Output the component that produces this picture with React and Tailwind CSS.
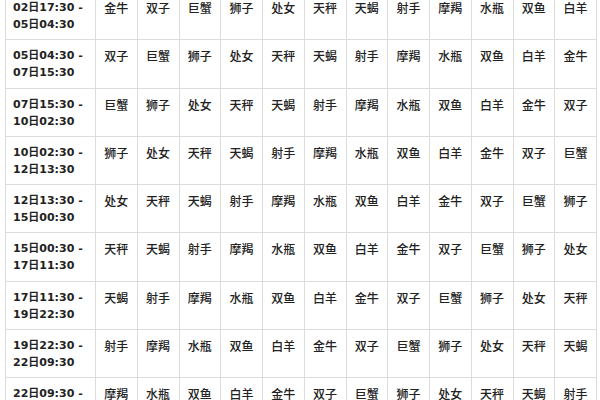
import React from "react";

const Z = ["白羊", "金牛", "双子", "巨蟹", "狮子", "处女", "天秤", "天蝎", "射手", "摩羯", "水瓶", "双鱼"];

const rows = [
  ["02日17:30 -", "05日04:30"],
  ["05日04:30 -", "07日15:30"],
  ["07日15:30 -", "10日02:30"],
  ["10日02:30 -", "12日13:30"],
  ["12日13:30 -", "15日00:30"],
  ["15日00:30 -", "17日11:30"],
  ["17日11:30 -", "19日22:30"],
  ["19日22:30 -", "22日09:30"],
  ["22日09:30 -", "24日20:30"],
];

export default function App() {
  return (
    <div className="w-[600px] h-[400px] overflow-hidden bg-white">
      <table className="ml-[5px] mt-[-9px] border-collapse table-fixed w-[591px]">
        <colgroup>
          <col className="w-[90px]" />
          {Z.map((_, i) => (
            <col key={i} className="w-[41.75px]" />
          ))}
        </colgroup>
        <tbody>
          {rows.map((r, ri) => (
            <tr key={ri} className="h-[48.25px]">
              <td
                className="border border-[#dcdcdc] align-top pt-[7px] pl-[7px] text-[11px] leading-[17px] font-bold text-[#222] whitespace-nowrap"
                style={{ fontFamily: '"DejaVu Sans", "Noto Sans CJK SC", sans-serif' }}
              >
                {r[0]}
                <br />
                {r[1]}
              </td>
              {Z.map((_, ci) => (
                <td
                  key={ci}
                  className="border border-[#dcdcdc] align-top pt-[7px] text-center text-[12px] leading-[17px] font-medium text-[#222] whitespace-nowrap"
                  style={{ fontFamily: '"Noto Sans CJK SC", sans-serif' }}
                >
                  {Z[(ri + ci + 1) % 12]}
                </td>
              ))}
            </tr>
          ))}
        </tbody>
      </table>
    </div>
  );
}
